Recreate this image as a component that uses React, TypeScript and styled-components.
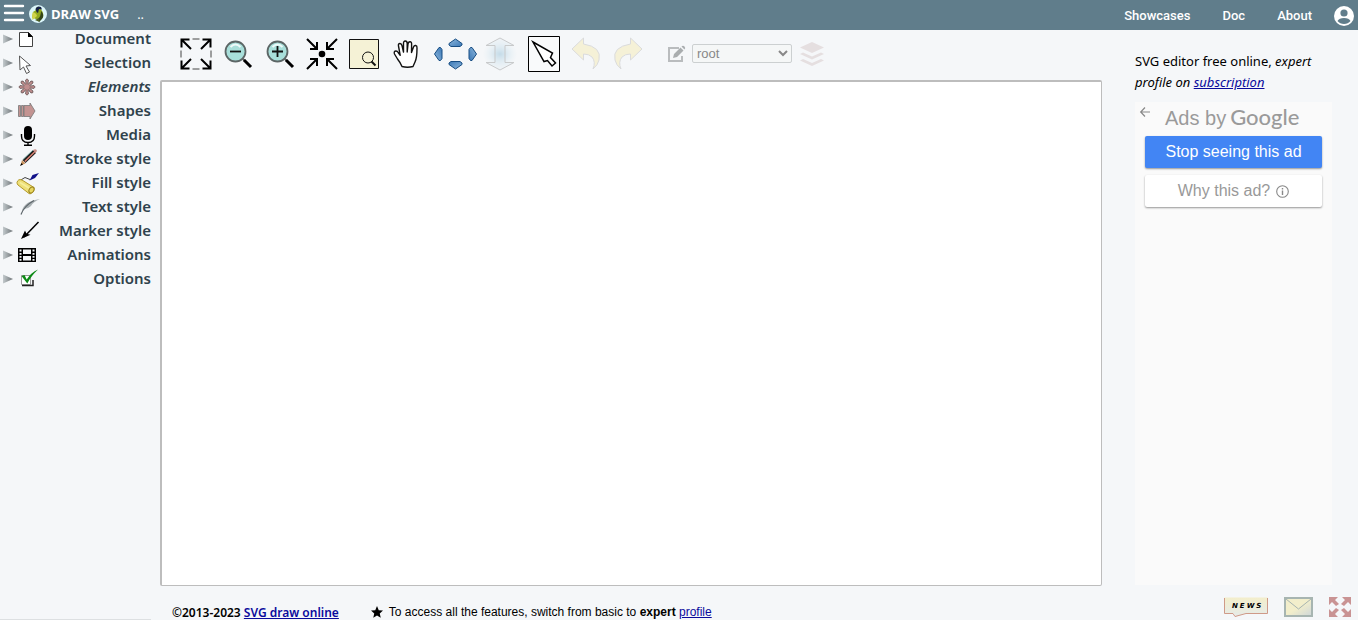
import React from "react";
import styled, { createGlobalStyle, css } from "styled-components";

const arial = `"Liberation Sans", Arial, sans-serif`;
const noto = `"Noto Sans", "Open Sans", sans-serif`;

const GlobalStyle = createGlobalStyle`
  * { box-sizing: border-box; }
  body { margin: 0; background: #f5f7f9; color: #000; font-family: ${noto}; }
  button { font: inherit; color: inherit; }
  svg { display: block; flex: none; overflow: visible; }
`;

const Page = styled.div`
  min-height: 100vh;
  display: grid;
  grid-template-rows: 30px 1fr 34px;
`;

const Header = styled.header`
  display: flex;
  align-items: center;
  justify-content: space-between;
  padding: 0 4px;
  background: #607d8b;
  color: #fff;
`;

const Brand = styled.div`
  display: flex;
  align-items: center;
  height: 28px;
  align-self: flex-start;
`;

const PlainButton = styled.button`
  display: flex;
  align-items: center;
  justify-content: center;
  padding: 0;
  border: 0;
  background: none;
`;

const MenuButton = styled(PlainButton)`
  padding-bottom: 2px;
`;

const BrandLink = styled.a`
  display: flex;
  align-items: center;
  gap: 4px;
  margin-left: 5px;
  color: #fff;
  font: 700 13px/20px "Open Sans", ${noto};
  text-decoration: none;
`;

const FileName = styled.span`
  margin-left: 18px;
  font: 13px/20px "Open Sans", ${noto};
`;

const Nav = styled.nav`
  display: flex;
  align-items: center;
  gap: 32px;
  padding-top: 1px;
`;

const NavLink = styled.a`
  color: #fff;
  font: 500 13px/20px Roboto, ${arial};
  text-decoration: none;
`;

const AccountButton = styled(PlainButton)`
  margin-left: -10px;
  align-self: flex-start;
`;

const Body = styled.div`
  display: grid;
  grid-template-columns: 160px minmax(0, 1fr) 256px;
`;

const Sidebar = styled.nav`
  display: flex;
  flex-direction: column;
  gap: 6px;
  padding: 0 9px 0 3px;
`;

const MenuItem = styled.button<{ $italic?: boolean }>`
  display: flex;
  align-items: center;
  height: 18px;
  padding: 0;
  border: 0;
  background: none;
  color: #2f424c;
  font: 600 15px/18px ${noto};
  font-style: ${(p) => (p.$italic ? "italic" : "normal")};
`;

const MenuIcon = styled.svg`
  width: 24px;
  height: 24px;
  margin-left: 3px;
`;

const MenuLabel = styled.span`
  flex: 1;
  margin-bottom: 2px;
  text-align: right;
`;

const Workspace = styled.main`
  display: flex;
  flex-direction: column;
  min-width: 0;
`;

const Toolbar = styled.div`
  display: flex;
  align-items: center;
  height: 50px;
  padding: 0 18px 2px;
`;

const ToolGroup = styled.div<{ $before?: number }>`
  display: flex;
  align-items: center;
  gap: 6px;
  margin-left: ${(p) => p.$before || 0}px;
`;

const Tool = styled(PlainButton)<{ $width?: number; $faded?: boolean }>`
  width: ${(p) => p.$width || 36}px;
  height: 36px;
  ${(p) => p.$faded && css`opacity: 0.35;`}
`;

const LayerSelect = styled.select`
  width: 100px;
  height: 19px;
  margin-bottom: 2px;
  padding: 0;
  border: 1px solid #ccd0d1;
  border-radius: 2px;
  background: #f5f7f7;
  color: #888;
  font: 13px/17px ${arial};
`;

const Canvas = styled.section`
  flex: 1;
  min-height: 200px;
  border: solid #bdbdbd;
  border-width: 2px 1px 1px 2px;
  border-radius: 2px;
  background: #fff;
`;

const Aside = styled.aside`
  display: flex;
  flex-direction: column;
  padding: 21px 26px 1px 33px;
`;

const Tagline = styled.p`
  margin: 0 0 9px;
  font: 13px/21px ${noto};
`;

const Link = styled.a`
  color: #0a0a9c;
`;

const AdPanel = styled.section`
  flex: 1;
  padding: 0 10px;
  background: #fafafa;
  font-family: ${arial};
`;

const AdHead = styled.div`
  display: flex;
  align-items: flex-start;
  height: 34px;
  margin-left: -5px;
  color: #9a9a9a;
`;

const BackButton = styled(PlainButton)`
  padding-top: 5px;
`;

const AdsBy = styled.span`
  margin: 4px 4px 0 15px;
  font-size: 20px;
  line-height: 24px;
`;

const GoogleWord = styled.span`
  margin-top: 2px;
  font: 500 22px/26px Lato, ${arial};
`;

const AdButton = styled.button<{ $primary?: boolean }>`
  display: flex;
  align-items: center;
  justify-content: center;
  gap: 6px;
  width: 100%;
  height: 32px;
  margin-bottom: 7px;
  padding: 0;
  border: 0;
  border-radius: 2px;
  background: ${(p) => (p.$primary ? "#4285f4" : "#fff")};
  color: ${(p) => (p.$primary ? "#fff" : "#999")};
  box-shadow: 0 1px 2px rgba(0, 0, 0, 0.4);
  font-size: 16px;
`;

const Footer = styled.footer`
  display: flex;
  align-items: center;
  padding: 16px 7px 0 0;

  &::before {
    content: "";
    align-self: flex-end;
    width: 151px;
    margin-right: 21px;
    border-bottom: 1px solid #dde0e2;
  }
`;

const Copyright = styled.p`
  margin: 0;
  padding-top: 4px;
  font: 600 12px/18px ${noto};
`;

const Hint = styled.p`
  display: flex;
  align-items: center;
  gap: 6px;
  margin: 0 auto 0 32px;
  padding-top: 2px;
  font: 12px/18px ${arial};
`;

const FooterActions = styled.div`
  display: flex;
  align-items: center;
  gap: 16px;
  margin-top: -8px;
`;

type Entry = { label: string; italic?: boolean; icon: React.ReactNode };

const entries: Entry[] = [
  {
    label: "Document",
    icon: (
      <>
        <path d="M3.5 5.5h9l4 4v10h-13z" fill="#fff" stroke="#444" />
        <path d="M12 5v5h5z" fill="#000" />
      </>
    ),
  },
  {
    label: "Selection",
    icon: <path d="M3.5 5l11 9.500-4.500.5 3.500 6-3 1.500-3-6.500-3.500 3z" fill="#fff" stroke="#555" />,
  },
  {
    label: "Elements",
    italic: true,
    icon: (
      <g fill="#c08e8e" stroke="#665555" strokeWidth=".8">
        {[0, 45, 90, 135, 180, 225, 270, 315].map((a) => (
          <path key={a} d="M10.300 12L9.600 5q1.400-2.200 2.800 0L11.700 12z" transform={`rotate(${a} 11 12)`} />
        ))}
        <circle cx="11" cy="12" r="2.800" stroke="none" />
      </g>
    ),
  },
  {
    label: "Shapes",
    icon: (
      <g fill="#c39492" stroke="#777" strokeWidth=".8">
        <path d="M2.500 6.500h2v11h-2zM5.500 6.500h2v11h-2z" />
        <path d="M8 6.500h6V4l5 8-5 8v-2.500H8z" />
      </g>
    ),
  },
  {
    label: "Media",
    icon: (
      <>
        <rect x="8" y="3" width="8" height="14" rx="4" />
        <path d="M5.500 11v2q0 6.500 6.500 6.500t6.500-6.500v-2M12 19.500V22M8 22.200h8" fill="none" stroke="#000" strokeWidth="1.400" />
      </>
    ),
  },
  {
    label: "Stroke style",
    icon: (
      <>
        <path d="M8 14.500L18.500 4.500" stroke="#1c1c1c" strokeWidth="4.400" />
        <path d="M8.800 14.500L18.500 5" stroke="#e08474" strokeWidth="1.400" />
        <path d="M7 12.500L17 3" stroke="#7fb5b3" strokeWidth=".8" />
        <path d="M17 3q3.500-2 4 1l-1.500 2z" fill="#c98b83" />
        <path d="M4.500 18.500L6 13l3.500 3.500z" fill="#c9925d" />
        <path d="M4 19l1.500-3 1.500 1.500z" />
      </>
    ),
  },
  {
    label: "Fill style",
    icon: (
      <>
        <path d="M4 9.500L9 6.500l5 2" fill="none" stroke="#444" />
        <path d="M13.500 9.500l3-5.500 6.500-2-4 5z" fill="#111189" />
        <path d="M1 11.500q1-4 5-2.500l12 7.500q1 4-3 6-1 .7-2 0L2 14q-1-1-1-2.500z" fill="#eee078" stroke="#b39929" />
        <ellipse cx="15.500" cy="19" rx="2.300" ry="3.200" transform="rotate(32 15.500 19)" fill="#e8d761" stroke="#9b851f" />
        <path d="M4 11.500l9 5.500" stroke="#f6ee9c" strokeWidth="1.600" />
      </>
    ),
  },
  {
    label: "Text style",
    icon: (
      <>
        <path d="M6 16Q8 6 24 4Q17 7 15 11Q12 14 8 14z" fill="#aab1b4" />
        <path d="M5 19.500Q8 11 18 5.500" fill="none" stroke="#5d666b" strokeWidth="1.200" />
      </>
    ),
  },
  {
    label: "Marker style",
    icon: (
      <>
        <path d="M8 18L22.500 3" stroke="#000" strokeWidth="1.500" />
        <path d="M5 20L9 11.500l1.500 3.200 4 1z" />
      </>
    ),
  },
  {
    label: "Animations",
    icon: (
      <>
        <path d="M2 5h18v14H2z" />
        <path d="M7 6.500h8v4.500H7zM7 13h8v4.500H7zM3.500 6.500h2v2h-2zM3.500 10h2v1.700h-2zM3.500 13h2v1.700h-2zM3.500 16h2v1.700h-2zM16.500 6.500h2v2h-2zM16.500 10h2v1.700h-2zM16.500 13h2v1.700h-2zM16.500 16h2v1.700h-2z" fill="#f5f7f9" />
      </>
    ),
  },
  {
    label: "Options",
    icon: (
      <>
        <path d="M5.500 8.500h9v9h-9z" fill="#fff" stroke="#999" />
        <path d="M6 18.500h11V13" fill="none" stroke="#222" strokeWidth="1.500" />
        <path d="M5.500 9l3-1 2.200 4.500Q15 5.500 22 2.500 15 9 11.300 16.500z" fill="#0c8a16" />
      </>
    ),
  },
];

const Triangle = () => (
  <svg width="10" height="10" viewBox="0 0 10 10">
    <defs>
      <linearGradient id="tri" x1="0" x2="1">
        <stop offset="0" stopColor="#c3cacd" />
        <stop offset="1" stopColor="#6d7376" />
      </linearGradient>
    </defs>
    <path d="M0 .500L10 5 0 9.500z" fill="url(#tri)" />
  </svg>
);

const Magnifier = ({ plus }: { plus?: boolean }) => (
  <svg width="30" height="30" viewBox="0 0 30 30">
    <path d="M18 18l4 4" stroke="#666" strokeWidth="2" />
    <path d="M21 21l7 7" stroke="#000" strokeWidth="3" />
    <circle cx="12.500" cy="12.500" r="10" fill="#a8dfda" stroke="#5c6666" strokeWidth="1.800" />
    <path d="M7.500 8q5-5 10 0" fill="none" stroke="#eefafa" strokeWidth="2" />
    <path d={plus ? "M7 12.500h11M12.500 7v11" : "M7 12.500h11"} stroke="#111" strokeWidth="1.800" />
  </svg>
);

const PanArrow = "M0 0L6.500 4.500V6L4.500 7.500h-9L-6.500 6V4.500z";

const App = () => (
  <Page>
    <GlobalStyle />
    <Header>
      <Brand>
        <MenuButton aria-label="Menu">
          <svg width="20" height="18" viewBox="0 0 20 18">
            <path d="M1 2h18M1 9h18M1 16h18" stroke="#fff" strokeWidth="2.400" strokeLinecap="round" />
          </svg>
        </MenuButton>
        <BrandLink href="#home">
          <svg width="18" height="18" viewBox="0 0 18 18">
            <circle cx="9" cy="9" r="9" fill="#dcf6fa" />
            <path d="M7 3q4-3 5 1.500 3 3 2 8l-3 2.500-4-1-4-1.500 1.500-6Q7 6 7 3z" fill="#91a920" />
            <path d="M3.500 7.500Q7 7 8 11l-4.500 4q-1-4 0-7.500z" fill="#cfd34a" />
            <path d="M6.500 4Q8 .500 12 2l1 2.500-3-.5-1 4q-2-1-2.500-4z" fill="#172346" />
            <path d="M12 6q4 4 1 8l-3 3-1-3q3-3 3-8z" fill="#33461a" />
            <path d="M6 15l4-2 .5 4z" fill="#4d5e25" />
          </svg>
          DRAW SVG
        </BrandLink>
        <FileName>..</FileName>
      </Brand>
      <Nav>
        <NavLink href="#showcases">Showcases</NavLink>
        <NavLink href="#doc">Doc</NavLink>
        <NavLink href="#about">About</NavLink>
        <AccountButton aria-label="Account">
          <svg width="20" height="26" viewBox="0 0 20 26">
            <circle cx="10" cy="13" r="10" fill="#fff" />
            <circle cx="10" cy="10" r="3.600" fill="#607d8b" />
            <path d="M3.500 18Q5 15 10 15t6.500 3q-2.500 3-6.500 3t-6.500-3z" fill="#607d8b" />
          </svg>
        </AccountButton>
      </Nav>
    </Header>

    <Body>
      <Sidebar aria-label="Tools">
        {entries.map((e) => (
          <MenuItem key={e.label} $italic={e.italic}>
            <Triangle />
            <MenuIcon viewBox="0 0 24 24">{e.icon}</MenuIcon>
            <MenuLabel>{e.label}</MenuLabel>
          </MenuItem>
        ))}
      </Sidebar>

      <Workspace>
        <Toolbar role="toolbar">
          <ToolGroup>
            <Tool aria-label="Fit to page">
              <svg width="32" height="32" viewBox="0 0 32 32" fill="none" stroke="#000">
                {[0, 90, 180, 270].map((a) => (
                  <g key={a} transform={`rotate(${a} 16 16)`}>
                    <path d="M1.500 9.500v-8h8M2 2l9 9" strokeWidth="2" />
                    <path d="M12.500 1h7" stroke="#444" />
                  </g>
                ))}
              </svg>
            </Tool>
            <Tool aria-label="Zoom out"><Magnifier /></Tool>
            <Tool aria-label="Zoom in"><Magnifier plus /></Tool>
            <Tool aria-label="Center">
              <svg width="32" height="32" viewBox="0 0 32 32" fill="none" stroke="#000" strokeWidth="2">
                {[0, 90, 180, 270].map((a) => (
                  <path key={a} d="M1 1l10 10M11 4v7H4" transform={`rotate(${a} 16 16)`} />
                ))}
                <circle cx="16" cy="16" r="3.300" fill="#000" stroke="none" />
              </svg>
            </Tool>
            <Tool aria-label="Zoom to area">
              <svg width="30" height="30" viewBox="0 0 30 30" fill="none" stroke="#111">
                <path d="M.5.5h29v29H.5z" fill="#f5f2d6" />
                <circle cx="19" cy="18.500" r="5.500" />
                <path d="M22.500 22.500l4 4" strokeWidth="2" />
              </svg>
            </Tool>
            <Tool aria-label="Pan">
              <svg width="26" height="28" viewBox="0 0 26 28" fill="#fff" stroke="#111" strokeWidth="1.400" strokeLinejoin="round">
                <path d="M9 26.500Q7 22 4.500 19L1.500 14Q.5 11 3 11q1.300 0 2.200 1.500l2 2.800L5.500 6Q5 3.500 7 3.500q1.500 0 2 2.200L10.500 12V3.500Q10.500 1 12.300 1t1.900 2.500V12L15 4q.3-2.200 2-2.200T18.600 4L18.500 12.500 20.500 7q.7-1.800 2.200-1.500T24 8Q24 18 22 22l-2 4.500q-5.500 1.500-11 0z" />
              </svg>
            </Tool>
            <Tool $width={50} aria-label="Move view">
              <svg width="44" height="30" viewBox="0 0 44 30">
                <defs>
                  <linearGradient id="pan" x1="0" x2="1" y2="1">
                    <stop offset="0" stopColor="#8db7dc" />
                    <stop offset="1" stopColor="#3c79b7" />
                  </linearGradient>
                </defs>
                <g fill="url(#pan)" stroke="#174d83">
                  <path d={PanArrow} transform="translate(22.500 0)" />
                  <path d={PanArrow} transform="translate(22.500 30) rotate(180)" />
                  <path d={PanArrow} transform="translate(1.500 15) rotate(-90)" />
                  <path d={PanArrow} transform="translate(43.500 15) rotate(90)" />
                </g>
              </svg>
            </Tool>
            <Tool $width={28} $faded aria-label="Fit height">
              <svg width="32" height="34" viewBox="0 0 32 34">
                <defs>
                  <radialGradient id="halo">
                    <stop offset="0" stopColor="#63a4c8" />
                    <stop offset="1" stopColor="#b9deef" stopOpacity="0" />
                  </radialGradient>
                </defs>
                <ellipse cx="16" cy="17" rx="17" ry="14" fill="url(#halo)" />
                <path d="M16 1L30 8.500H21v17h9L16 33 2 25.500h9v-17H2z" fill="#8fbfd8" fillOpacity=".2" stroke="#777" />
              </svg>
            </Tool>
          </ToolGroup>
          <ToolGroup $before={12}>
            <Tool aria-label="Select">
              <svg width="32" height="36" viewBox="0 0 32 36">
                <path d="M.5.5h31v35H.5z" fill="#fff" fillOpacity=".4" stroke="#000" />
                <path d="M5 6l19.500 11-2 4.500 5 5.500-3.500 3-4.500-5.500-3.500 1z" fill="#fff" stroke="#000" strokeWidth="1.500" />
              </svg>
            </Tool>
            <Tool $faded aria-label="Undo">
              <svg width="28" height="32" viewBox="0 0 28 32">
                <path d="M0 11L11.500 0v6Q30 9 27 22q-1 5-6 9 3-7-1-12-3-3-8.500-3v6z" fill="#f7e69a" stroke="#aaa" />
              </svg>
            </Tool>
            <Tool $faded aria-label="Redo">
              <svg width="28" height="32" viewBox="0 0 28 32">
                <path d="M28 11L16.500 0v6Q-2 9 1 22q1 5 6 9-3-7 1-12 3-3 8.500-3v6z" fill="#f7e69a" stroke="#aaa" />
              </svg>
            </Tool>
          </ToolGroup>
          <ToolGroup $before={22}>
            <Tool $width={18} aria-label="Edit">
              <svg width="18" height="18" viewBox="0 0 18 18">
                <path d="M11 3H1v13h13v-5" fill="none" stroke="#b9bcbe" strokeWidth="2" />
                <path d="M5 13l1-4 6.500-6.500 3 3L9 12zM13.500 1.500q1.500-1.500 3 0t0 3l-3-3z" fill="#a9adaf" />
              </svg>
            </Tool>
            <LayerSelect aria-label="Layer" defaultValue="root">
              <option value="root">root</option>
            </LayerSelect>
            <Tool $width={28} aria-label="Layers">
              <svg width="24" height="24" viewBox="0 0 24 24" fill="#e5dfe0">
                <path d="M12 0l12 5.500L12 11 0 5.500z" />
                <path d="M0 12l3-1.500 9 4 9-4 3 1.500-12 5.500z" />
                <path d="M0 18.500L3 17l9 4 9-4 3 1.500L12 24z" />
              </svg>
            </Tool>
          </ToolGroup>
        </Toolbar>
        <Canvas aria-label="Drawing" />
      </Workspace>

      <Aside>
        <Tagline>
          SVG editor free online, <em>expert</em> <em>profile on</em>{" "}
          <em><Link href="#subscription">subscription</Link></em>
        </Tagline>
        <AdPanel>
          <AdHead>
            <BackButton aria-label="Back">
              <svg width="10" height="10" viewBox="0 0 10 10">
                <path d="M10 5H1M5 .500L.700 5 5 9.500" fill="none" stroke="#888" strokeWidth="1.200" />
              </svg>
            </BackButton>
            <AdsBy>Ads by</AdsBy>
            <GoogleWord>Google</GoogleWord>
          </AdHead>
          <AdButton $primary>Stop seeing this ad</AdButton>
          <AdButton>
            Why this ad?
            <svg width="13" height="13" viewBox="0 0 13 13">
              <circle cx="6.500" cy="6.500" r="5.800" fill="none" stroke="#888" strokeWidth="1.100" />
              <path d="M6.500 5.500V10M6.500 3v1.500" stroke="#888" strokeWidth="1.400" />
            </svg>
          </AdButton>
        </AdPanel>
      </Aside>
    </Body>

    <Footer>
      <Copyright>
        ©2013-2023 <Link href="#home">SVG draw online</Link>
      </Copyright>
      <Hint>
        <svg width="12" height="12" viewBox="0 0 24 24">
          <path d="M12 0l3.500 8.500 8.500.7-6.500 5.700 2 8.600L12 19l-7.500 4.500 2-8.600L0 9.200l8.500-.7z" />
        </svg>
        <span>
          To access all the features, switch from basic to <b>expert</b> <Link href="#profile">profile</Link>
        </span>
      </Hint>
      <FooterActions>
        <PlainButton aria-label="News">
          <svg width="44" height="20" viewBox="0 0 44 20">
            <defs>
              <linearGradient id="paper" x2="0" y2="1">
                <stop offset="0" stopColor="#f3eecb" />
                <stop offset="1" stopColor="#e6ebe9" />
              </linearGradient>
            </defs>
            <path d="M.5.5h43v16H22l-10 3-2-3H.5z" fill="url(#paper)" />
            <path d="M.5 1v15.500H9l2 3 11-3h21.500V1" fill="none" stroke="#cf9a88" />
            <text x="8" y="11" fontFamily="DejaVu Sans, sans-serif" fontSize="7" fontWeight="700" fontStyle="italic" letterSpacing="2">NEWS</text>
          </svg>
        </PlainButton>
        <PlainButton aria-label="Mail">
          <svg width="29" height="20" viewBox="0 0 29 20">
            <defs>
              <linearGradient id="mail" x2="1" y2="1">
                <stop offset=".5" stopColor="#f2eecb" />
                <stop offset="1" stopColor="#cdd6da" />
              </linearGradient>
            </defs>
            <path d="M1 1h27v18H1z" fill="url(#mail)" stroke="#a7b5b1" strokeWidth="2" />
            <path d="M2 2l12.500 10L27 2" fill="none" stroke="#a7b5b1" />
          </svg>
        </PlainButton>
        <PlainButton aria-label="Full screen">
          <svg width="22" height="20" viewBox="0 0 22 20" fill="#c99393">
            <path d="M0 0h9L6 3l4 4-3 2-4-4-3 3zM22 0h-9l3 3-4 4 3 2 4-4 3 3zM0 20h9l-3-3 4-4-3-2-4 4-3-3zM22 20h-9l3-3-4-4 3-2 4 4 3-3z" />
          </svg>
        </PlainButton>
      </FooterActions>
    </Footer>
  </Page>
);

export default App;
